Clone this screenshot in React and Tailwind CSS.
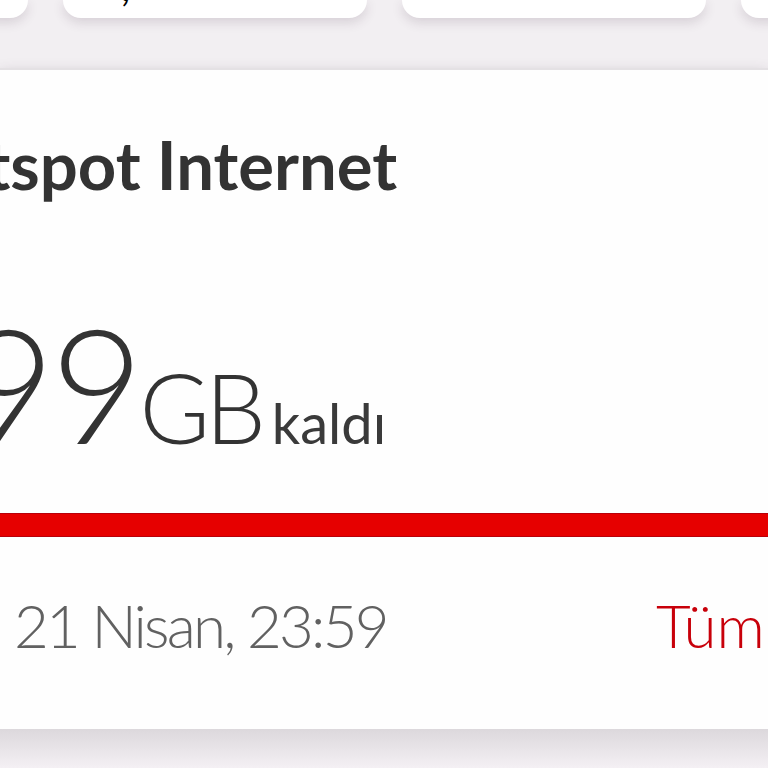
import React from 'react';

const TOP_CARDS = [0, 1, 2, 3];

export default function App() {
  return (
    <div
      className="w-[768px] h-[768px] overflow-hidden bg-[#f2eff2] flex flex-col"
      style={{ fontFamily: 'Lato, "Noto Sans", sans-serif' }}
    >
      {/* üstteki kart sırası, yalnızca alt kenarları görünüyor */}
      <div className="flex gap-[35px] -ml-[276px] h-[18px] shrink-0">
        {TOP_CARDS.map((i) => (
          <div
            key={i}
            className="w-[304px] shrink-0 h-full bg-white rounded-b-[22px] shadow-[0_4px_12px_rgba(60,40,60,0.16)] relative overflow-hidden"
          >
            {i === 1 && (
              <span className="absolute left-[58px] -top-[34px] text-[40px] leading-none text-black">,</span>
            )}
          </div>
        ))}
      </div>

      <div className="mt-[50px] h-[661px] shrink-0 bg-[#fefefe] border-t-2 border-[#e4e1e4] shadow-[0_6px_14px_rgba(70,50,70,0.28)] flex flex-col">
        <h1 className="mt-[61px] -ml-[103px] text-[67px] leading-none font-bold text-[#333] whitespace-nowrap">
          Hotspot Internet
        </h1>

        <div className="mt-[104px] -ml-[38px] flex items-baseline leading-none text-[#333] whitespace-nowrap">
          <span className="text-[160px] font-light tracking-[-4px]">99</span>
          <span className="text-[96px] font-light tracking-[-5px]">GB</span>
          <span className="text-[56px] font-normal ml-[11px] text-[#3a3a3a]">kaldı</span>
        </div>

        <div className="mt-[51px] h-[24px] bg-[#e60000] border-y border-[#b8000a] shrink-0" />

        <div className="mt-[58px] -mr-[197px] flex items-baseline justify-between whitespace-nowrap leading-none text-[60px] font-light">
          <span className="ml-[14px] text-[#616161] tracking-[-2.8px]">21 Nisan, 23:59</span>
          <span className="text-[#c8000a]">Tümünü gör</span>
        </div>
      </div>

      <div className="flex-1 bg-gradient-to-b from-[#dcd8dc] to-[#f4f0f4]" />
    </div>
  );
}
